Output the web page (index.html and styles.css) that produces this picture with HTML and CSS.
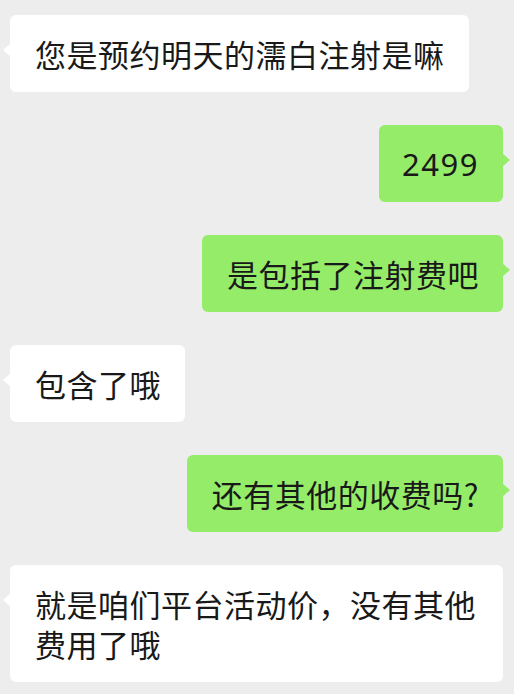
FILE: index.html
```html
<!DOCTYPE html>
<html lang="zh-CN">
  <head>
    <meta charset="UTF-8" />
    <meta name="viewport" content="width=device-width, initial-scale=1.0" />
    <title>聊天</title>
    <link rel="stylesheet" href="styles.css">
  </head>
  <body>
    <div class="chat">
      <div class="msg left"><p class="bubble">您是预约明天的濡白注射是嘛</p></div>
      <div class="msg right"><p class="bubble num">2499</p></div>
      <div class="msg right"><p class="bubble">是包括了注射费吧</p></div>
      <div class="msg left"><p class="bubble">包含了哦</p></div>
      <div class="msg right"><p class="bubble">还有其他的收费吗?</p></div>
      <div class="msg left"><p class="bubble">就是咱们平台活动价，没有其他费用了哦</p></div>
    </div>
  </body>
</html>
```

FILE: styles.css
```css
* {
  margin: 0;
  padding: 0;
  box-sizing: border-box;
}
html,
body {
  height: 100%;
}
body {
  background: #ededed;
  font-family: "Noto Sans CJK SC", "Noto Sans", sans-serif;
  color: #191919;
}
.chat {
  display: flex;
  flex-direction: column;
  gap: 33px;
  padding: 15px 11px 0 10px;
}
.msg {
  display: flex;
}
.msg.right {
  justify-content: flex-end;
}
.bubble {
  position: relative;
  max-width: 496px;
  padding: 19px 24px 18px 25px;
  border-radius: 6px;
  font-size: 31px;
  line-height: 40px;
  letter-spacing: 0.5px;
  background: #fff;
}
.bubble.num {
  font-family: "Noto Sans", sans-serif;
  letter-spacing: 1.5px;
  padding-left: 23px;
  padding-right: 24px;
}
.right .bubble {
  background: #95ec69;
}
.bubble::before {
  content: "";
  position: absolute;
  top: 28px;
  border-top: 7px solid transparent;
  border-bottom: 7px solid transparent;
}
.left .bubble::before {
  left: -7px;
  border-right: 8px solid #fff;
}
.right .bubble::before {
  right: -7px;
  border-left: 8px solid #95ec69;
}
```
